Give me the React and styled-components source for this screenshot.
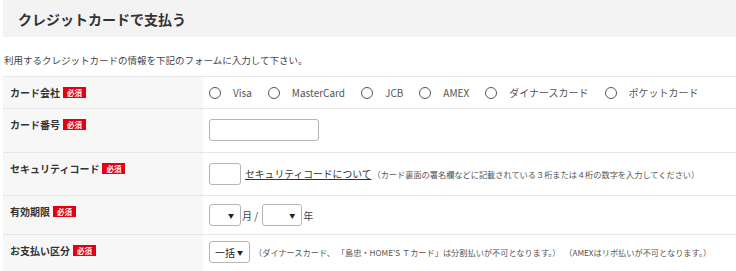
import React from "react";
import styled, { createGlobalStyle } from "styled-components";

const GlobalStyle = createGlobalStyle`
  body {
    margin: 0;
    background: #ffffff;
    font-family: "Noto Sans CJK JP", "Noto Sans", sans-serif;
    color: #333333;
  }
`;

const Page = styled.div`
  margin-left: 3px;
`;

const Header = styled.div`
  background: #f3f3f3;
  height: 37px;
  display: flex;
  align-items: center;
  padding-left: 15px;
`;

const Title = styled.h2`
  margin: 0;
  font-size: 14px;
  font-weight: 700;
  line-height: 1;
  color: #333333;
`;

const Lead = styled.p`
  margin: 0;
  padding: 16px 0 9px 1px;
  font-size: 9.5px;
  line-height: 14px;
  color: #444444;
`;

const Table = styled.div`
  border-top: 1px solid #e6e6e6;
`;

const Row = styled.div`
  display: flex;
  height: ${({ $h }) => $h}px;
  border-bottom: 1px solid #e6e6e6;
`;

const LabelCell = styled.div`
  width: 193px;
  flex-shrink: 0;
  background: #f7f7f7;
  padding: 9px 0 0 7px;
  display: flex;
  align-items: flex-start;
  gap: 3px;
  font-size: 10px;
  line-height: 13px;
  font-weight: 700;
  color: #333333;
`;

const Badge = styled.span`
  display: inline-block;
  background: #e40012;
  color: #ffffff;
  font-size: 7.5px;
  font-weight: 700;
  line-height: 11px;
  padding: 0 4px;
  margin-top: 1px;
`;

const ValueCell = styled.div`
  flex: 1;
  padding: ${({ $top }) => $top}px 0 0 6px;
  display: flex;
  align-items: center;
  align-self: flex-start;
  font-size: 10px;
  line-height: 13px;
  color: #444444;
`;

const Radio = styled.label`
  display: flex;
  align-items: center;
  margin-right: 16px;
  color: #555555;
`;

const Circle = styled.span`
  width: 10px;
  height: 10px;
  border: 1.6px solid #555555;
  border-radius: 50%;
  margin-right: 12px;
  background: #ffffff;
`;

const TextBox = styled.div`
  width: ${({ $w }) => $w}px;
  height: ${({ $hgt }) => $hgt}px;
  box-sizing: border-box;
  border: 1px solid #b5b5b5;
  border-radius: 3px;
  background: #ffffff;
`;

const SelectBox = styled.div`
  width: ${({ $w }) => $w}px;
  height: 22px;
  box-sizing: border-box;
  border: 1px solid #b5b5b5;
  border-radius: 3px;
  background: #ffffff;
  display: flex;
  align-items: center;
  justify-content: flex-end;
  padding: 0 6px 0 5px;
  font-size: 10px;
  color: #222222;
`;

const SelectText = styled.span`
  flex: 1;
`;

const Arrow = styled.span`
  font-size: 6px;
  color: #222222;
`;

const Unit = styled.span`
  margin: 0 ${({ $r }) => $r || 0}px 0 1px;
  color: #444444;
`;

const HelpLink = styled.a`
  margin-left: 4px;
  font-size: 9.8px;
  color: #333333;
  text-decoration: underline;
`;

const Note = styled.span`
  margin-left: ${({ $ml }) => $ml || 0}px;
  font-size: 8.2px;
  color: #555555;
  white-space: pre;
`;

const brands = ["Visa", "MasterCard", "JCB", "AMEX", "ダイナースカード", "ポケットカード"];

const Label = ({ children }) => (
  <LabelCell>
    <span>{children}</span>
    <Badge>必須</Badge>
  </LabelCell>
);

export default function App() {
  return (
    <Page>
      <GlobalStyle />
      <Header>
        <Title>クレジットカードで支払う</Title>
      </Header>
      <Lead>利用するクレジットカードの情報を下記のフォームに入力して下さい。</Lead>
      <Table>
        <Row $h={31}>
          <Label>カード会社</Label>
          <ValueCell $top={9}>
            {brands.map((b) => (
              <Radio key={b}>
                <Circle />
                {b}
              </Radio>
            ))}
          </ValueCell>
        </Row>
        <Row $h={43}>
          <Label>カード番号</Label>
          <ValueCell $top={10}>
            <TextBox $w={110} $hgt={22} />
          </ValueCell>
        </Row>
        <Row $h={42}>
          <Label>セキュリティコード</Label>
          <ValueCell $top={10}>
            <TextBox $w={32} $hgt={22} />
            <HelpLink>セキュリティコードについて</HelpLink>
            <Note $ml={1}>（カード裏面の署名欄などに記載されている３桁または４桁の数字を入力してください）</Note>
          </ValueCell>
        </Row>
        <Row $h={38}>
          <Label>有効期限</Label>
          <ValueCell $top={8}>
            <SelectBox $w={32}>
              <Arrow>▼</Arrow>
            </SelectBox>
            <Unit $r={4}>月 /</Unit>
            <SelectBox $w={40}>
              <Arrow>▼</Arrow>
            </SelectBox>
            <Unit>年</Unit>
          </ValueCell>
        </Row>
        <Row $h={36}>
          <Label>お支払い区分</Label>
          <ValueCell $top={6}>
            <SelectBox $w={41}>
              <SelectText>一括</SelectText>
              <Arrow>▼</Arrow>
            </SelectBox>
            <Note $ml={4}>
              {"（ダイナースカード、 「島忠・HOME'S Ｔカード」は分割払いが不可となります。）  （AMEXはリボ払いが不可となります。）"}
            </Note>
          </ValueCell>
        </Row>
      </Table>
    </Page>
  );
}
